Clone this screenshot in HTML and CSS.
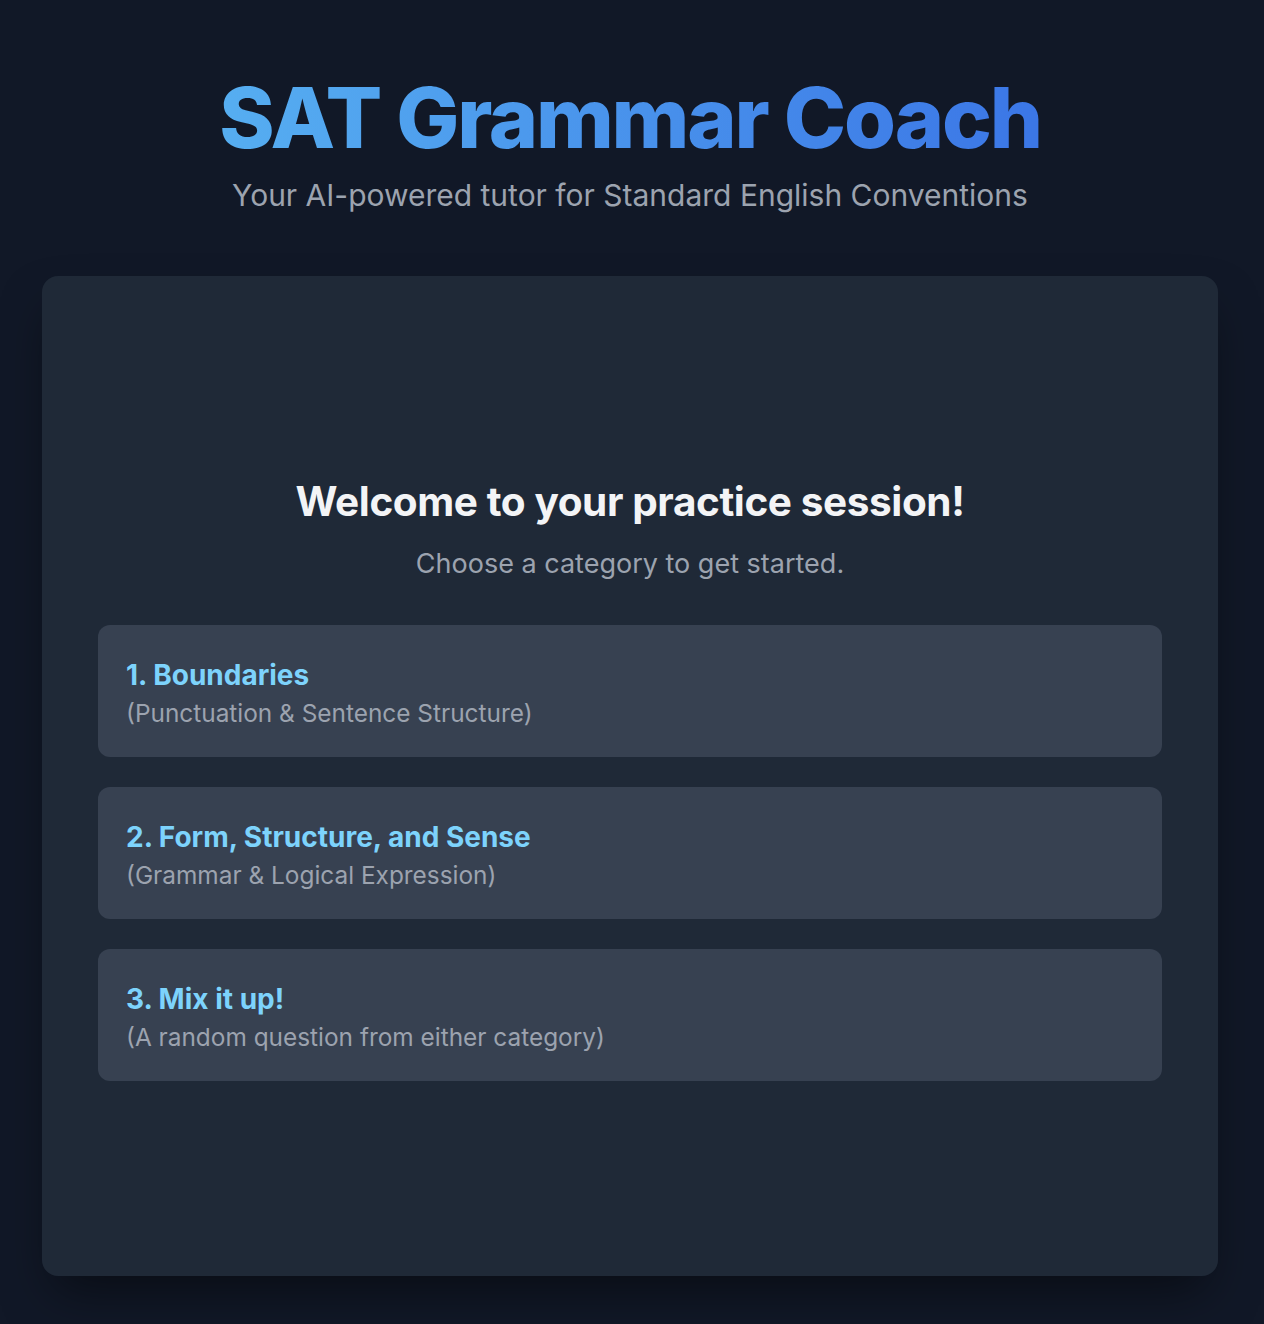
FILE: index.html
```html
<!DOCTYPE html>
<html lang="en">
<head>
<meta charset="utf-8">
<title>SAT Grammar Coach</title>
<link rel="stylesheet" href="styles.css">
</head>
<body>
<div class="page">
  <header class="header">
    <h1 class="title">SAT Grammar Coach</h1>
    <p class="tagline">Your AI-powered tutor for Standard English Conventions</p>
  </header>
  <main class="card">
    <div class="welcome">
      <h2 class="welcome-title">Welcome to your practice session!</h2>
      <p class="welcome-sub">Choose a category to get started.</p>
      <div class="options">
        <button class="option">
          <span class="option-title">1. Boundaries</span>
          <span class="option-sub">(Punctuation &amp; Sentence Structure)</span>
        </button>
        <button class="option">
          <span class="option-title">2. Form, Structure, and Sense</span>
          <span class="option-sub">(Grammar &amp; Logical Expression)</span>
        </button>
        <button class="option">
          <span class="option-title">3. Mix it up!</span>
          <span class="option-sub">(A random question from either category)</span>
        </button>
      </div>
    </div>
  </main>
</div>
</body>
</html>
```

FILE: styles.css
```css
* { box-sizing: border-box; }
html, body { margin: 0; padding: 0; }
body {
  background: #111827;
  font-family: Inter, "Noto Sans", sans-serif;
  color: #e5e7eb;
  min-height: 1324px;
}
.page {
  padding: 72px 0 48px 42px;
}
.header {
  width: 1176px;
  text-align: center;
  margin-bottom: 61px;
}
.title {
  margin: 0;
  font-size: 84px;
  font-weight: 800;
  letter-spacing: -2.2px;
  line-height: 1.1;
  background: linear-gradient(90deg, #56aef1 0%, #3b76e6 100%);
  -webkit-background-clip: text;
  background-clip: text;
  color: transparent;
  display: inline-block;
}
.tagline {
  margin: 12px 0 0;
  font-size: 30px;
  line-height: 1.3;
  color: #9ca3af;
}
.card {
  width: 1176px;
  background: #1f2937;
  border-radius: 16px;
  min-height: 1000px;
  padding: 61px 56px 56px;
  display: flex;
  flex-direction: column;
  justify-content: center;
  box-shadow: 0 25px 50px -12px rgba(0, 0, 0, 0.5);
}
.welcome { text-align: center; }
.welcome-title {
  margin: 0;
  font-size: 40.5px;
  line-height: 1.25;
  font-weight: 700;
  letter-spacing: -0.4px;
  color: #f3f4f6;
}
.welcome-sub {
  margin: 19px 0 0;
  font-size: 27px;
  line-height: 1.3;
  color: #9ca3af;
}
.options {
  margin-top: 44px;
  display: flex;
  flex-direction: column;
  gap: 30px;
}
.option {
  display: flex;
  flex-direction: column;
  align-items: flex-start;
  text-align: left;
  height: 132px;
  justify-content: center;
  padding: 4px 28px 0;
  background: #374151;
  border: none;
  border-radius: 12px;
  font-family: inherit;
  cursor: pointer;
}
.option-title {
  font-size: 28px;
  line-height: 1.3;
  font-weight: 700;
  color: #7dd3fc;
}
.option-sub {
  margin-top: 5px;
  font-size: 24.4px;
  line-height: 1.3;
  color: #9ca3af;
}
```
